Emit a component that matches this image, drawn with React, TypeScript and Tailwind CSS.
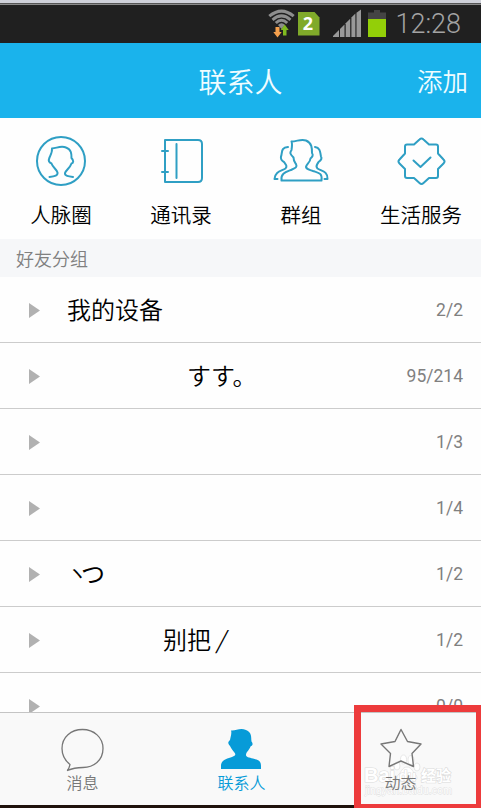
import React from 'react';

interface Group {
    name: React.ReactNode;
    count: string;
    indent?: string;
}

const groups: Group[] = [
    { name: '我的设备', count: '2/2' },
    { name: 'すす。', count: '95/214', indent: 'pl-[120px]' },
    { name: '', count: '1/3' },
    { name: '', count: '1/4' },
    {
        name: (
            <span className="flex items-center font-normal">
                <span className="w-[14px] text-[20px]">ヽ</span>
                <span>つ</span>
            </span>
        ),
        count: '1/2',
    },
    {
        name: (
            <span>
                别把<span className="ml-[7px] inline-block -skew-x-[12deg]">/</span>
            </span>
        ),
        count: '1/2',
        indent: 'pl-[96px]',
    },
    { name: '', count: '0/0' },
];

const StatusBar = () => (
    <div className="h-[43px] shrink-0 bg-[#202020] border-t-[3px] border-[#cfd1d9] flex flex-col">
        <div className="h-[2px] bg-[#555555] border-b border-[#8a8a8a]" />
        <div className="flex-1 flex justify-end">
            <svg width="27" height="36" viewBox="269 5 27 36" fill="none">
                <g stroke="#8e8e8e" strokeWidth="3">
                    <path d="M270.3 16.2Q282.500 6 294.700 16.200" />
                    <path d="M273.500 19.800Q282.500 12 291.500 19.800" />
                    <path d="M276.800 23Q282.500 17.500 288.200 23" />
                </g>
                <path d="M279 25Q282.500 21.500 286 25L282.500 29Z" fill="#8e8e8e" />
                <path d="M276.500 27h4v5h2.200l-4.200 5.500-4.200-5.500h2.200z" fill="#f5a04d" />
                <path d="M284 35.500h3.500v-5.500h2.200l-4-5.500-4 5.500h2.300z" fill="#7fba20" />
            </svg>
            <svg width="22" height="25" viewBox="0 0 22 25" className="mt-[6px] ml-[3px]">
                <path d="M0 1h16.500L21.500 6.500V24.500H0z" fill="#80aa2a" />
                <text x="10" y="19" textAnchor="middle" fontSize="18" fontWeight="700" fill="#fff" className="font-['Open_Sans',sans-serif]">2</text>
            </svg>
            <svg width="30" height="36" viewBox="332 5 30 36" className="ml-[12px]">
                <g fill="#999999">
                    <path d="M333 37v-1l6-6v7z" />
                    <path d="M340 37v-8l4.500-4.500V37z" />
                    <path d="M345.700 37V23.300l4.500-4.500V37z" />
                    <path d="M351.400 37V17.600l4-4V37z" />
                    <path d="M356.500 37V12.700l4.500-3.200V37z" />
                </g>
            </svg>
            <svg width="18" height="36" viewBox="368 5 18 36" className="ml-[6px]">
                <path d="M374 10h6v2.500h6V20h-18v-7.500h6z" fill="#444" />
                <path d="M368 19h18v18h-18z" fill="#93cf08" />
            </svg>
            <span className="ml-[8px] mr-[20px] w-[67px] whitespace-nowrap text-right text-[27px] leading-[38px] font-light text-[#a3a3a3] font-[Roboto,sans-serif]">12:28</span>
        </div>
    </div>
);

const PeopleIcon = () => (
    <svg width="54" height="52" viewBox="34 135 54 52" fill="none" stroke="#2f9fc4" strokeWidth="2" strokeLinecap="round" strokeLinejoin="round">
        <circle cx="61" cy="161" r="24" />
        <path d="M49.500 177C55 176.500 58 175.500 57.500 172.500C56.500 169 53 168 51.500 163.500C49 162.500 48 161 49.500 157.500C51 154 52.500 151.500 52 148.500C57 148 61 145.500 66 147.500C71.500 149.500 71.500 154 71.500 158C74 160.500 73.500 163 71.500 163.500C70 168 66 170 65 173C64.500 176 68.500 176.500 73 177" />
    </svg>
);

const BookIcon = () => (
    <svg width="54" height="52" viewBox="153 135 54 52" fill="none" stroke="#2f9fc4" strokeWidth="2" strokeLinecap="round" strokeLinejoin="round">
        <path d="M164 140h33q4 0 4 4v34q0 4-4 4h-33zM175.500 144v34M161 151h6M161 172h6" />
    </svg>
);

const GroupIcon = () => (
    <svg width="56" height="52" viewBox="273 135 56 52" fill="none" stroke="#2f9fc4" strokeWidth="2" strokeLinecap="round" strokeLinejoin="round">
        <path d="M281.500 180.500C280.500 173 286 172 292 169.500C295.500 168 297.500 167 296 164C294.500 162 293.500 161 293.500 157.500C290 154 289.500 153 291.500 150C292 147 292.500 144 291.500 141.500C297 141.500 301 138.500 306 140.500C312 143 312 148 312 153C313.500 155 312.500 157 310.500 158.500C310 163 306.500 163.500 306 167C306.500 169.500 309 169.500 313 171C319 173 322.500 173 321.500 180.500Z" />
        <path d="M288 147C280.500 147.500 282.500 153 281 156.500C280.500 159 282 161 284 162C286 165 287.500 166 285.500 168.500C282 171 275 171 274.500 179H277.500" />
        <path d="M315 147C321 148 320 153 321 156.500C322.500 159 320 161 318.500 162C317 165 315 166 317.500 168.500C321 171 328 171 327.500 179H324.500" />
    </svg>
);

const BadgeIcon = () => (
    <svg width="54" height="52" viewBox="394 135 54 52" fill="none" stroke="#2f9fc4" strokeWidth="2" strokeLinecap="round" strokeLinejoin="round">
        <path d="M419.500 139.500q2-2 4 0L429 144.500h7q2 0 2 2v7l5.500 6q2 2 0 4L438 169v7q0 2-2 2h-7l-5.500 5q-2 2-4 0L414 178h-7q-2 0-2-2v-7l-5.500-5.500q-2-2 0-4L405 153.500v-7q0-2 2-2h7z" />
        <path d="M413.500 160.500l7 6.500 10-9.500" />
    </svg>
);

const shortcuts = [
    { label: '人脉圈', icon: <PeopleIcon /> },
    { label: '通讯录', icon: <BookIcon /> },
    { label: '群组', icon: <GroupIcon /> },
    { label: '生活服务', icon: <BadgeIcon /> },
];

const GroupRow: React.FC<{ group: Group }> = ({ group }) => (
    <div className="h-[66px] shrink-0 flex items-center border-b border-[#cccccc] pl-[29px] pr-[18px]">
        <svg width="11" height="15" viewBox="0 0 11 15" className="mr-[27px] mt-[1px]">
            <path d="M0 0L11 7.500L0 15z" fill="#b1b1b1" />
        </svg>
        <span className={`flex-1 -mt-[1px] whitespace-pre text-[24px] leading-[30px] text-black ${group.indent ?? ''}`}>
            {group.name}
        </span>
        <span className="mt-[2px] text-[17.5px] font-normal text-[#808080] font-[Roboto,sans-serif]">{group.count}</span>
    </div>
);

const Watermark = () => (
    <svg width="96" height="48" viewBox="362 752 96 48" className="absolute left-[362px] top-[39px]">
        <g fill="#ffffff" stroke="#e2e2e2" strokeWidth="0.8">
            <ellipse cx="397" cy="766" rx="3" ry="4" />
            <ellipse cx="403.500" cy="759.500" rx="3" ry="4.500" />
            <ellipse cx="411" cy="760" rx="3" ry="4.500" />
            <ellipse cx="417" cy="767" rx="3" ry="4" />
            <path d="M407 767c5 0 6 6 9 8 3 5-1 7-9 6-8 1-12-1-9-6 3-2 4-8 9-8z" />
        </g>
        <g fill="#ffffff" stroke="#dcdcdc" strokeWidth="1.200" paintOrder="stroke" className="font-['Liberation_Sans','Noto_Sans_CJK_SC',sans-serif]">
            <text x="364" y="782" fontSize="20" fontWeight="700">Bai</text>
            <text x="399" y="781" fontSize="14" fontWeight="700">du</text>
            <text x="421" y="781" fontSize="15" fontWeight="700">经验</text>
            <text x="365" y="794" fontSize="10.500" strokeWidth="0.8" textLength="87">jingyan.baidu.com</text>
        </g>
    </svg>
);

const TabBar = () => (
    <div className="h-[96px] shrink-0 relative flex border-t border-[#c4c4c4] border-b-[3px] border-b-[#20120c] bg-[#f9f9f9] text-[16px] leading-[20px]">
        <div className="w-[165px] flex flex-col items-center pt-[15px] text-[#777777]">
            <svg width="44" height="44" viewBox="61 728 44 44" fill="none" stroke="#777777" strokeWidth="1.300" strokeLinejoin="round">
                <path d="M67.500 770.500C69.500 768 69.500 766 70 764.500C64.500 760 62 755.500 62 748.500C62 737 71 729.500 82.500 729.500C94 729.500 103 737.500 103 748.500C103 760.500 93.500 767.500 83 767.500C77 767.500 73 768 67.500 770.500Z" />
            </svg>
            <span>消息</span>
        </div>
        <div className="w-[153px] flex flex-col items-center pt-[15px] text-[#079bd8]">
            <svg width="44" height="44" viewBox="220 728 44 44" fill="#079bd8">
                <path d="M221 769V765C222 759 228 758.500 232 757C236 755.500 236 754 234 752C231.500 749 231 747.500 230 746C227.500 743 228 742 230 740C230.500 737 232 733 231 730.500C236 731 240 727.500 246 730C252 732.500 251 737 251.500 741.500C253.500 744 252.500 745.500 250.500 746.500C249 750.500 246 752 246 755C246 757 249 757.500 253 758.500C258 760 261 760.500 261 766V769Z" />
            </svg>
            <span>联系人</span>
        </div>
        <div className="flex-1 flex flex-col items-center pt-[15px] pr-[2px] text-[#777777]">
            <Watermark />
            <svg width="44" height="44" viewBox="379 728 44 44" fill="none" stroke="#777777" strokeWidth="1.400" strokeLinejoin="round" className="relative left-[2px]">
                <path d="M401 729.500L407.500 741.500L421 744L412 753.500L413.500 766.500L401 761L389 766.500L390.500 753.500L381 744L395 741.500Z" />
            </svg>
            <span className="relative left-[2px]">动态</span>
        </div>
        {/* Highlighted tab */}
        <div className="absolute left-[354px] -top-[8px] w-[127px] h-[103px] border-[7px] border-r-[5px] border-b-[4px] border-[#ed3b3c]" />
    </div>
);

export default function App() {
    return (
        <div className="w-[481px] h-[808px] overflow-hidden flex flex-col bg-[#fefefe] font-['Noto_Sans_CJK_SC',sans-serif] font-[350]">
            <StatusBar />

            {/* Title */}
            <header className="h-[75px] shrink-0 grid grid-cols-[1fr_auto_1fr] items-center bg-[#1ab3ec] text-[#effcff]">
                <span />
                <h1 className="text-[28px]">联系人</h1>
                <span className="justify-self-end pr-[13px] text-[25.5px]">添加</span>
            </header>

            {/* Shortcuts */}
            <div className="h-[121px] shrink-0 grid grid-cols-4 pt-[17px] pl-[1px]">
                {shortcuts.map((item) => (
                    <div key={item.label} className="flex flex-col items-center">
                        {item.icon}
                        <span className="mt-[11px] text-[20.5px] leading-[32px] text-black">{item.label}</span>
                    </div>
                ))}
            </div>

            <div className="h-[38px] shrink-0 pl-[16px] bg-[#f6f7f9] text-[18px] leading-[38px] text-[#808080]">好友分组</div>

            {/* Friend groups */}
            <div className="flex-1 min-h-0 overflow-hidden flex flex-col">
                {groups.map((group, idx) => (
                    <GroupRow key={idx} group={group} />
                ))}
            </div>

            <TabBar />
        </div>
    );
}
